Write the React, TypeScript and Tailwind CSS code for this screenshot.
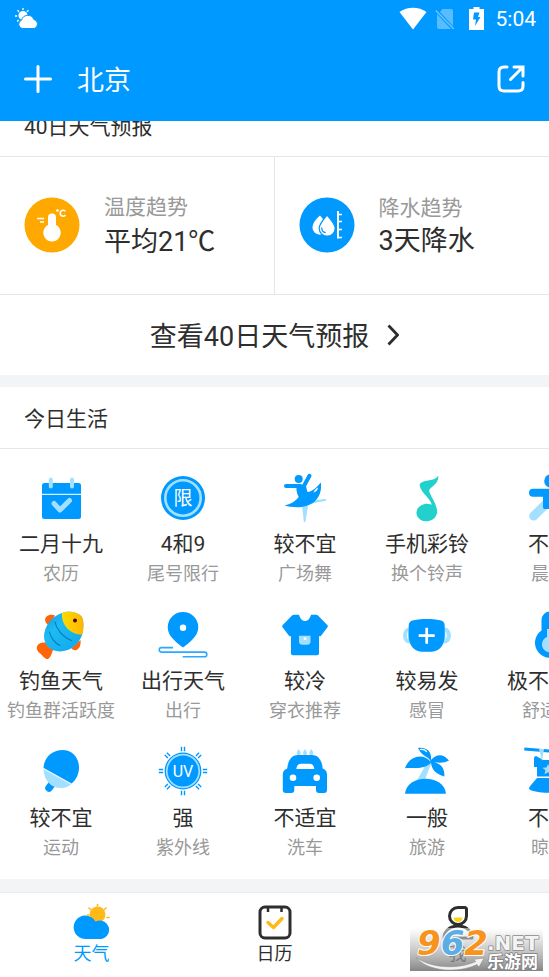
import type { ReactNode } from "react";

interface LifeItem {
  icon: ReactNode;
  label: string;
  sub: string;
}

const BLUE = "#0099ff";
const LIGHT = "#a3e0ff";
const YELLOW = "#ffba1a";
const INK = "#2e2e2e";

const Icon = ({ children }: { children: ReactNode }) => (
  <svg viewBox="0 0 52 52" className="h-[52px] w-[52px]" aria-hidden="true">
    {children}
  </svg>
);

const LunarIcon = () => (
  <Icon>
    <rect x="7" y="11" width="39" height="36" rx="2.5" fill={BLUE} />
    <path d="M7 22.3h39" stroke="#d9f3ff" strokeWidth="1.2" />
    <path d="M15.8 7.5v7M37 7.5v7" stroke={LIGHT} strokeWidth="4" strokeLinecap="round" />
    <path d="M19 31.5l6 6.5 9.500-9.500" fill="none" stroke={LIGHT} strokeWidth="5" strokeLinecap="round" strokeLinejoin="round" />
  </Icon>
);

const LimitIcon = () => (
  <Icon>
    <circle cx="26" cy="26" r="22" fill={BLUE} />
    <circle cx="26" cy="26" r="17.700" fill="none" stroke={LIGHT} strokeWidth="2.600" />
    <text x="26" y="33" textAnchor="middle" fontSize="19" fill="#fff">限</text>
  </Icon>
);

const DanceIcon = () => (
  <Icon>
    <path d="M23 34h6l-2.500 15.500q-1 1.500-1.700 0zM32 28.500l14-1.600q2.500.5.500 2L31 31.800z" fill={LIGHT} />
    <circle cx="19.700" cy="7" r="4" fill={BLUE} />
    <path d="M7 14h14M30.500 3.800l-6.500 12" stroke={BLUE} strokeWidth="4" strokeLinecap="round" />
    <path d="M17.500 12.500h9l2 7.500c5-.5 9-4.500 13.400-9.500.8 8-1 14-6.500 19.200C27 36.500 15 36 5.500 33.500c6-1.500 11-4 14.200-8.500-2.200-4-2.600-8-2.200-12.500z" fill={BLUE} />
    <path d="M34.500 20.500c1-2.500 2.500-4 4.500-5-.3 2.400-1.800 4.500-4.500 5z" fill="#fff" />
  </Icon>
);

const NoteIcon = () => (
  <Icon>
    <g fill="#22d1cb">
      <ellipse cx="25.700" cy="40.500" rx="10.300" ry="8.800" transform="rotate(-8 25.700 40.500)" />
      <path d="M19 11.500C24 7 33 10 37.300 3.700c.6 8-6.300 10-9.300 14.500 1 6 9 14 8.200 24L31 34c-1-7-8-11-10.800-16.500C18.800 15 18.500 13 19 11.500z" />
    </g>
  </Icon>
);

const RunIcon = () => (
  <Icon>
    <path d="M27 28L10.700 44M30 32l4 14" stroke={LIGHT} strokeWidth="9" strokeLinecap="round" />
    <circle cx="28" cy="9" r="6.800" fill={BLUE} />
    <path d="M10 20.700h32" stroke={BLUE} strokeWidth="8" strokeLinecap="round" />
    <path d="M20 18h14v19H21.500q-1.500 0-1.500-2z" fill={BLUE} />
  </Icon>
);

const FishIcon = () => (
  <Icon>
    <defs>
      <linearGradient id="fishBody" x1="0" y1="0" x2="1" y2="1">
        <stop offset="0" stopColor="#1594dd" />
        <stop offset=".35" stopColor="#1bbcf5" />
        <stop offset="1" stopColor="#12a4ea" />
      </linearGradient>
      <linearGradient id="fishHead" x1="0" y1="0" x2="1" y2="0">
        <stop offset="0" stopColor="#ffdc00" />
        <stop offset="1" stopColor="#ffb400" />
      </linearGradient>
    </defs>
    <path d="M20 6.500c-4-2-9.500 0-10 4 .2 3 2 5 4 6zM45.500 31c.5 4.500-.5 8.500-4.500 10.200-2.500.3-4-.7-4.500-2.200zM14 35C10 32 1.500 33.500 1.700 39.500c1 4 4 5 6 7.500 1.500 2 4 4 6 2.500 2.500-2 3-5.500 4.500-9z" fill="#ff6408" />
    <path d="M27 4C33 1.500 43 3 46.500 7.500 49 11 48.800 20 47 26c-2.500 8-11 16.500-22 16.500C15 42 9 36 9 27.500 9.500 16.500 17 7 27 4z" fill="url(#fishBody)" />
    <path d="M27 4C33 1.500 43 3 46.500 7.500 49 11 49 19 47.300 25.500 37 26 26 17.500 27 4z" fill="url(#fishHead)" />
    <path d="M20 13c1 6 7 15 16.500 18.500M14.500 23c1 5 5.500 11.500 10.500 13.500" fill="none" stroke="#0a78b0" strokeWidth="1.100" strokeLinecap="round" />
    <circle cx="40" cy="11.500" r="2" fill="#3a0d00" />
  </Icon>
);

const PinIcon = () => (
  <Icon>
    <path d="M26 38.500c-6-4.500-15.300-11-15.300-20.200a15.300 15.300 0 0 1 30.600 0C41.300 27.500 32 34 26 38.500z" fill={BLUE} />
    <circle cx="26" cy="18.700" r="3.200" fill="#fff" />
    <path d="M16 38.600H4.500a2 2 0 0 0 0 4.500h43a2.300 2.300 0 0 1 0 4.600H25.700" fill="none" stroke="#2ba8ff" strokeWidth="1.600" />
  </Icon>
);

const ShirtIcon = () => (
  <Icon>
    <path d="M15 5.700h5c1 3.500 3 6.300 6 6.300s5-2.800 6-6.300h5q1.200 0 2 .8l9.500 9.800q.8 1 0 2L42 26.800q-1 1-2 .2V44.500q0 1.800-1.800 1.800H13.800q-1.800 0-1.800-1.800V27q-1 .8-2-.2l-6.500-8.500q-.8-1 0-2L13 6.500q.8-.8 2-.8z" fill={BLUE} />
    <path d="M20 26.800h11.500v5.500q0 3.500-3.500 3.500h-4.500q-3.500 0-3.500-3.500z" fill={LIGHT} />
    <circle cx="26" cy="29.700" r="1.400" fill="#fff" />
  </Icon>
);

const MaskIcon = () => (
  <Icon>
    <ellipse cx="8.500" cy="26.500" rx="6.500" ry="8" fill={LIGHT} />
    <ellipse cx="43.500" cy="26.500" rx="6.500" ry="8" fill={LIGHT} />
    <path d="M7 22.500q-2 4 0 8zM44.500 22.500q2.500 4 0 8z" fill="#fff" />
    <path d="M12.500 11.300C21 9.600 31 9.600 39 11.300q4.500.8 4.700 5v10c0 9-4.500 16.400-13 16.400h-10c-8.500 0-13-7.400-13-16.400v-10q.2-4.200 4.800-5z" fill={BLUE} />
    <path d="M17.700 26.700h16M25.700 18.700v16" stroke="#fff" strokeWidth="2.700" />
  </Icon>
);

const ComfortIcon = () => (
  <Icon>
    <path d="M18.500 11a8.500 8.500 0 0 1 17 0v10.500a15 15 0 1 1-17 0z" fill={BLUE} />
    <path d="M24 20h6v8a8 8 0 1 1-6 0z" fill={LIGHT} />
  </Icon>
);

const SportIcon = () => (
  <Icon>
    <path d="M18.500 36l-4.500 6" stroke={BLUE} strokeWidth="7.500" strokeLinecap="round" />
    <path d="M8.500 23c.4 12 8 19 17.500 19 4.500 0 8-1.300 10-4z" fill={LIGHT} />
    <path d="M8.500 22C9 11 17.500 4 27.500 4S44 12 44 21.500c0 6-2.500 12-7.500 16z" fill={BLUE} />
    <path d="M8.700 22.800L36 38" stroke="#d9f3ff" strokeWidth="1.200" />
  </Icon>
);

const UvIcon = () => (
  <Icon>
    {[0, 45, 90, 135, 180, 225, 270, 315].map((angle) => (
      <path key={angle} d="M24.500 0.800v4.400M27.500 0.800v4.400" stroke={BLUE} strokeWidth="1.400" transform={`rotate(${angle} 26 25)`} />
    ))}
    <circle cx="26" cy="25" r="18.400" fill={BLUE} />
    <circle cx="26" cy="25" r="16.300" fill="none" stroke={LIGHT} strokeWidth="1.700" />
    <text x="26" y="30.500" textAnchor="middle" fontSize="16" fill="#fff">UV</text>
  </Icon>
);

const CarIcon = () => (
  <Icon>
    <path d="M19.700 3c1.200 1.800 2 3 2 4.200a2 2 0 0 1-4 0c0-1.200.8-2.400 2-4.200zM26 3c1.200 1.800 2 3 2 4.200a2 2 0 0 1-4 0c0-1.200.8-2.400 2-4.200zM32.300 3c1.200 1.800 2 3 2 4.200a2 2 0 0 1-4 0c0-1.200.8-2.400 2-4.200z" fill={LIGHT} />
    <path d="M19 9h14c6 0 10 5 10.700 13.500q4.300 1.500 4.300 6V44q0 3-3 3h-5q-3 0-3-3v-4H15.300v4q0 3-3 3h-5.500q-3 0-3-3V28.500q0-4.500 4.400-6C9 14 13 9 19 9z" fill={BLUE} />
    <path d="M17.300 23q.5-5.200 5-5.200h8q4.500 0 5 5.200z" fill="#fff" />
    <circle cx="14" cy="31.700" r="3.300" fill="#fff" />
    <circle cx="37.700" cy="31.700" r="3.300" fill="#fff" />
  </Icon>
);

const PalmIcon = () => (
  <Icon>
    <path d="M15.500 35c3-5 7-12 10-17.500l5 .5c-3 5-5 11-6.500 17z" fill={LIGHT} />
    <path d="M4 47.700C5 38 14 32.700 24.500 32.700S44 38 45 47.700z" fill={BLUE} />
    <path d="M30 16C27 9 22 12 17 2c8-1 14 3 13 12 5-6 12-7 18 .5-5 3-10 2-15 2 7 1 11 6 10.300 14C35 28 31 24 30 17c-8 7-18 4.500-26 5.200C8 11 21 6 30 16z" fill={BLUE} />
    <path d="M19.500 3.500c2.500-.3 4.500.3 6 2" fill="none" stroke="#fff" strokeWidth="1.200" strokeLinecap="round" />
  </Icon>
);

const DryIcon = () => (
  <Icon>
    <path d="M13 10q6 3 7 4h14q1-1 7-4v11h-5v9.500H14V21h-3v-9q0-1.500 2-2z" fill={BLUE} />
    <path d="M14 32h23l9 11C36 48 13 48 6 43q0-2 2-4z" fill={BLUE} />
    <path d="M1.300 3l48 4" stroke={BLUE} strokeWidth="3" />
    <path d="M16 3h5l-2 12z" fill={LIGHT} />
    <path d="M25 18l1.500 3.500 4 .3-3 2.500 1 4-3.500-2-3.500 2 1-4-3-2.500 4-.3z" fill={LIGHT} />
  </Icon>
);

const lifeItems: LifeItem[] = [
  { icon: <LunarIcon />, label: "二月十九", sub: "农历" },
  { icon: <LimitIcon />, label: "4和9", sub: "尾号限行" },
  { icon: <DanceIcon />, label: "较不宜", sub: "广场舞" },
  { icon: <NoteIcon />, label: "手机彩铃", sub: "换个铃声" },
  { icon: <RunIcon />, label: "不宜", sub: "晨练" },
  { icon: <FishIcon />, label: "钓鱼天气", sub: "钓鱼群活跃度" },
  { icon: <PinIcon />, label: "出行天气", sub: "出行" },
  { icon: <ShirtIcon />, label: "较冷", sub: "穿衣推荐" },
  { icon: <MaskIcon />, label: "较易发", sub: "感冒" },
  { icon: <ComfortIcon />, label: "极不舒适", sub: "舒适度" },
  { icon: <SportIcon />, label: "较不宜", sub: "运动" },
  { icon: <UvIcon />, label: "强", sub: "紫外线" },
  { icon: <CarIcon />, label: "不适宜", sub: "洗车" },
  { icon: <PalmIcon />, label: "一般", sub: "旅游" },
  { icon: <DryIcon />, label: "不宜", sub: "晾晒" },
];

const Header = () => (
  <header className="sticky top-0 z-10 bg-[#0099ff] text-white">
    <div className="flex h-[37px] items-center justify-between pr-[13px] pl-[14px]">
      <svg viewBox="0 0 25 22" className="h-[22px] w-[25px]" aria-hidden="true">
        <circle cx="9" cy="7.500" r="4.500" fill="#fff" />
        <path d="M9 0v2M3.500 2.300l1.500 1.500M1 8h2.200M14.500 2.300L13 3.800M3.200 13.500l1.500-1.500" stroke="#fff" strokeWidth="1.300" />
        <path d="M8.500 20.500a4.300 4.300 0 0 1-1-8.300 6.500 6.500 0 0 1 12.300-.8 4.700 4.700 0 0 1 .4 9.100z" fill="#fff" stroke={BLUE} strokeWidth="1" />
      </svg>
      <div className="flex items-center">
        <svg viewBox="0 0 28 23" className="mr-2 h-[23px] w-7" aria-hidden="true">
          <path d="M.5 5C8-.8 20-.8 27.500 5L14 22.500z" fill="#fff" />
        </svg>
        <svg viewBox="0 0 20 22" className="mr-[14px] h-[22px] w-5" aria-hidden="true">
          <path d="M7.500 1H16q2 0 2 2v15L5 4zM2 6l14 15H4q-2 0-2-2z" fill="#fff" fillOpacity=".35" />
          <path d="M.8 2.500l18 18.500" stroke="#fff" strokeOpacity=".4" strokeWidth="1.600" />
        </svg>
        <svg viewBox="0 0 15 23" className="mr-3 h-[23px] w-[15px]" aria-hidden="true">
          <path d="M4.500 0h6v2H15v21H0V2h4.500z" fill="#fff" />
          <path d="M5 5.500h5.500L9 10h2.500L6 19l1-6.500H4z" fill={BLUE} />
        </svg>
        <span className="text-[21px] leading-6">5:04</span>
      </div>
    </div>
    <div className="flex h-[84px] items-center px-6">
      <button type="button" aria-label="添加城市">
        <svg viewBox="0 0 28 28" className="h-7 w-7">
          <path d="M1.500 14h25M14 1.500v25" stroke="#fff" strokeWidth="3" strokeLinecap="round" />
        </svg>
      </button>
      <h1 className="ml-[25px] flex-1 pt-1 text-[27px] leading-9">北京</h1>
      <button type="button" aria-label="分享">
        <svg viewBox="0 0 28 28" className="h-7 w-7" fill="none" stroke="#fff" strokeWidth="3">
          <path d="M10 2H7Q2 2 2 7v14q0 5 5 5h14q5 0 5-5v-3.500" strokeLinecap="round" />
          <path d="M13.500 14.500L25 3M17 2h9v9" strokeLinecap="round" />
        </svg>
      </button>
    </div>
  </header>
);

const TrendCard = ({ icon, title, value }: { icon: ReactNode; title: string; value: ReactNode }) => (
  <div className="flex items-center pt-[34px] pb-[35px] pl-6">
    {icon}
    <div className="ml-6">
      <p className="text-[21px] leading-8 text-[#999]">{title}</p>
      <p className="text-[27px] leading-[34px]">{value}</p>
    </div>
  </div>
);

const Trends = () => (
  <div className="grid grid-cols-2 divide-x divide-[#e6e6e6] border-b border-[#e6e6e6]">
    <TrendCard
      title="温度趋势"
      value={<>平均21<span className="font-['Noto_Sans_CJK_SC',sans-serif]">℃</span></>}
      icon={
        <svg viewBox="0 0 56 56" className="h-14 w-14" aria-hidden="true">
          <circle cx="28" cy="28" r="27.500" fill="#ffa900" />
          <path d="M24 20.500a4 4 0 0 1 8 0V28a8.700 8.700 0 1 1-8 0z" fill="#fff" />
          <path d="M13 21.500h7M16 25h4" stroke="#fff" strokeWidth="1.300" />
          <circle cx="33.500" cy="13.500" r="1.300" fill="#fff" />
          <path d="M41.500 14.300a3 3 0 1 0 0 3.800" fill="none" stroke="#fff" strokeWidth="1.600" />
        </svg>
      }
    />
    <TrendCard
      title="降水趋势"
      value="3天降水"
      icon={
        <svg viewBox="0 0 56 56" className="h-14 w-14" aria-hidden="true">
          <circle cx="28" cy="28" r="27.500" fill={BLUE} />
          <path d="M21 18.500c5 5.500 7 9 7 12a7 7 0 0 1-14.500 0c0-4 3-8 7.500-12z" fill="#fff" />
          <path d="M28 18c5 6 8.200 9.500 8.200 13.200a7.800 7.800 0 0 1-16 0C20.200 27.500 23 24 28 18z" fill="#fff" stroke={BLUE} strokeWidth="1.200" />
          <path d="M22.700 30.500c0 3 1.700 4.800 4 5.200" fill="none" stroke={BLUE} strokeWidth="1.200" />
          <path d="M39 14v27.500" stroke="#fff" strokeWidth="2" />
          <path d="M39 17.500h4M39 24.500h4M39 32.500h4M39 40.500h4" stroke="#fff" strokeWidth="1.600" />
        </svg>
      }
    />
  </div>
);

const SectionTitle = ({ children }: { children: ReactNode }) => (
  <h2 className="flex h-[62px] items-center border-b border-[#e6e6e6] px-6 pt-1 text-[21px]">{children}</h2>
);

const TabBar = () => (
  <nav className="relative grid grid-cols-3 border-t border-[#ebebeb] bg-white pt-[11px] pb-[10px] text-[18px] leading-[27px]">
    <a href="#weather" className="flex flex-col items-center text-[#0099ff]">
      <svg viewBox="0 0 40 36" className="h-9 w-10" aria-hidden="true">
        <circle cx="25.500" cy="10.500" r="8" fill={YELLOW} />
        <path d="M25.500 0v2M17 4l1.500 1.500M34 4l-1.500 1.500M35 13.500h2M15.500 11h1.500" stroke={YELLOW} strokeWidth="1.600" strokeLinecap="round" />
        <path d="M13 35a11.700 11.700 0 1 1 10.500-17.500q3-1.200 6-.8A9.300 9.300 0 0 1 29.500 35z" fill={BLUE} />
      </svg>
      天气
    </a>
    <a href="#calendar" className="flex flex-col items-center">
      <svg viewBox="0 0 40 36" className="h-9 w-10" fill="none" aria-hidden="true">
        <rect x="5" y="3" width="30" height="31" rx="5" stroke={INK} strokeWidth="3" />
        <path d="M13 3v5M26.500 3v5" stroke={INK} strokeWidth="2.500" />
        <path d="M13 18.500l5.500 5 8.500-9" stroke={YELLOW} strokeWidth="3.500" strokeLinecap="round" strokeLinejoin="round" />
      </svg>
      日历
    </a>
    <a href="#me" className="flex flex-col items-center">
      <svg viewBox="0 0 40 36" className="h-9 w-10" fill="none" aria-hidden="true">
        <path d="M20 3.500h6.500q2 0 2 2V12A8.500 8.500 0 1 1 20 3.500z" stroke={INK} strokeWidth="3" />
        <path d="M15.500 13.500h9q-.5 4.500-4.500 4.500t-4.500-4.500z" fill="#ffd21a" />
        <path d="M6 34c0-7 6-12 14-12s14 5 14 12z" stroke={INK} strokeWidth="3" strokeLinejoin="round" />
      </svg>
      我
    </a>
    <Watermark />
  </nav>
);

const Watermark = () => (
  <svg
    viewBox="0 0 133 43"
    className="pointer-events-none absolute right-1.5 bottom-1.5 h-[43px] w-[133px]"
    aria-hidden="true"
  >
    <defs>
      <linearGradient id="markShade" x1="0" y1="0" x2="0" y2="1">
        <stop offset="0" stopColor="#fff" stopOpacity=".5" />
        <stop offset=".3" stopColor="#ccc" stopOpacity=".6" />
        <stop offset="1" stopColor="#707070" stopOpacity=".85" />
      </linearGradient>
    </defs>
    <rect width="133" height="43" fill="url(#markShade)" />
    <path d="M6 29.500c16 11 42 12 60 4l-3-2 11-1.500-5 9-2-2.500C48 45.500 18 44 6 29.500z" fill="#f2f2f2" stroke="#888" strokeWidth=".5" />
    <g fontWeight="700" strokeLinejoin="round" fontFamily="DejaVu Sans, sans-serif">
      <g fontSize="34" fontStyle="italic" stroke="#fff" strokeWidth="2" paintOrder="stroke">
        <text x="7" y="27">
          <tspan fill="#f7941d">9</tspan>
          <tspan fill="#5aaee3">6</tspan>
          <tspan fill="#f7941d">2</tspan>
        </text>
      </g>
      <text x="77" y="22" fontSize="20" fill="#f4f4f4" stroke="#8a8a8a" strokeWidth="1.500" paintOrder="stroke">.NET</text>
    </g>
    <text x="77" y="40" fontSize="17" fontWeight="700" fill="#fff" stroke="#808080" strokeWidth="1.500" paintOrder="stroke">
      乐游网
    </text>
  </svg>
);

export default function App() {
  return (
    <div className="bg-[#f2f4f6] font-[Roboto,'Noto_Sans_CJK_SC',sans-serif] text-[#2e2e2e]">
      <Header />
      <main>
        <section className="-mt-[26px] bg-white">
          <SectionTitle>40日天气预报</SectionTitle>
          <Trends />
          <a href="#forecast" className="flex h-20 items-center justify-center gap-[18px] text-[27px]">
            <span className="pt-1">查看40日天气预报</span>
            <svg viewBox="0 0 12 22" className="h-[22px] w-3" fill="none" aria-hidden="true">
              <path d="M1.500 1.500l9 9.500-9 9.500" stroke={INK} strokeWidth="2.800" />
            </svg>
          </a>
        </section>

        <section className="mt-3 mb-[13px] bg-white">
          <SectionTitle>今日生活</SectionTitle>
          <div className="overflow-x-auto pt-[23px] pb-[21px] [scrollbar-width:none]">
            <ul className="grid w-max grid-cols-[repeat(5,122px)] gap-y-[25px]">
              {lifeItems.map((item, i) => (
                <li key={i} className="flex flex-col items-center whitespace-nowrap">
                  {item.icon}
                  <p className="text-[21px] leading-10">{item.label}</p>
                  <p className="text-[18px] leading-5 text-[#999]">{item.sub}</p>
                </li>
              ))}
            </ul>
          </div>
        </section>
      </main>
      <TabBar />
    </div>
  );
}
